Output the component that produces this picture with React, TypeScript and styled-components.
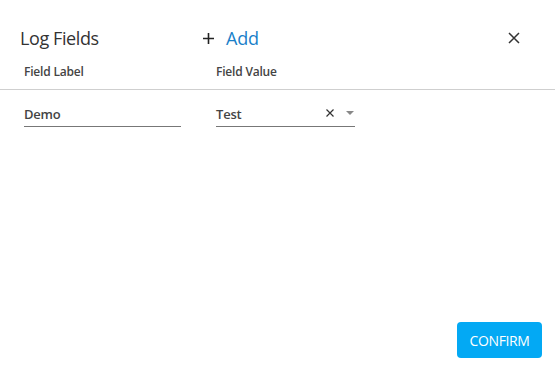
import React from "react";
import styled, { createGlobalStyle } from "styled-components";

const Global = createGlobalStyle`
  html, body { margin: 0; padding: 0; background: #fff; }
  body { font-family: "Open Sans", "Noto Sans", sans-serif; color: #333; }
`;

const Dialog = styled.div`
  width: 555px;
  height: 385px;
  display: flex;
  flex-direction: column;
  box-sizing: border-box;
`;

const Header = styled.div`
  display: flex;
  align-items: center;
  height: 28px;
  padding: 24px 0 0 20px;
`;

const Title = styled.div`
  width: 183px;
  font-size: 18px;
  color: #333;
  letter-spacing: -0.4px;
`;

const AddButton = styled.button`
  display: flex;
  align-items: center;
  gap: 12px;
  border: none;
  background: none;
  padding: 0;
  font-family: inherit;
  font-size: 18px;
  color: #1a7fc9;
  cursor: pointer;
  letter-spacing: -0.2px;
`;

const Spacer = styled.div`
  flex: 1;
`;

const CloseButton = styled.button`
  border: none;
  background: none;
  padding: 0;
  margin-right: 35px;
  width: 12px;
  height: 12px;
  display: flex;
  cursor: pointer;
`;

const ColumnHead = styled.div`
  display: flex;
  gap: 35px;
  padding: 0 0 0 24px;
  height: 35px;
  align-items: center;
  margin-top: 2px;
  border-bottom: 1px solid #cfcfcf;
`;

const HeadLabel = styled.div<{ $w: number }>`
  width: ${(p) => p.$w}px;
  font-size: 12px;
  font-weight: 600;
  color: #444;
  letter-spacing: -0.2px;
`;

const Row = styled.div`
  display: flex;
  gap: 35px;
  padding: 12px 0 0 24px;
`;

const Field = styled.div<{ $w: number }>`
  width: ${(p) => p.$w}px;
  height: 24px;
  border-bottom: 1px solid #777;
  display: flex;
  align-items: center;
  font-size: 13px;
  font-weight: 600;
  color: #444;
  letter-spacing: -0.2px;
`;

const FieldText = styled.span`
  flex: 1;
`;

const Icons = styled.div`
  display: flex;
  align-items: center;
  gap: 12px;
  margin-right: 1px;
  margin-top: -2px;
`;

const Footer = styled.div`
  margin-top: auto;
  display: flex;
  justify-content: flex-end;
  padding: 0 13px 27px 0;
`;

const Confirm = styled.button`
  width: 85px;
  height: 36px;
  border: none;
  border-radius: 4px;
  background: #03a9f4;
  color: #fff;
  font-family: inherit;
  font-size: 14px;
  letter-spacing: -0.4px;
  cursor: pointer;
`;

export default function App() {
  return (
    <>
      <Global />
      <Dialog>
        <Header>
          <Title>Log Fields</Title>
          <AddButton>
            <svg width="11" height="11" viewBox="0 0 11 11">
              <path d="M5.5 0v11M0 5.5h11" stroke="#222" strokeWidth="1.6" />
            </svg>
            Add
          </AddButton>
          <Spacer />
          <CloseButton aria-label="close">
            <svg width="12" height="12" viewBox="0 0 12 12">
              <path d="M1 1l10 10M11 1L1 11" stroke="#333" strokeWidth="1.5" />
            </svg>
          </CloseButton>
        </Header>
        <ColumnHead>
          <HeadLabel $w={157}>Field Label</HeadLabel>
          <HeadLabel $w={139}>Field Value</HeadLabel>
        </ColumnHead>
        <Row>
          <Field $w={157}>
            <FieldText>Demo</FieldText>
          </Field>
          <Field $w={139}>
            <FieldText>Test</FieldText>
            <Icons>
              <svg width="8" height="8" viewBox="0 0 8 8">
                <path d="M0.5 0.5l7 7M7.5 0.5l-7 7" stroke="#333" strokeWidth="1.2" />
              </svg>
              <svg width="8" height="4" viewBox="0 0 8 4">
                <path d="M0 0h8L4 4z" fill="#888" />
              </svg>
            </Icons>
          </Field>
        </Row>
        <Footer>
          <Confirm>CONFIRM</Confirm>
        </Footer>
      </Dialog>
    </>
  );
}
